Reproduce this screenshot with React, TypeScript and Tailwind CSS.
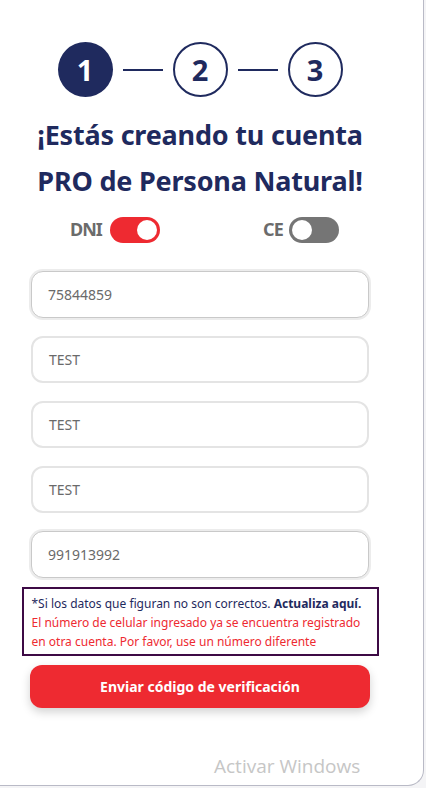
const NAVY = "text-[#1f2a5e]";

const FIELDS = [
  { value: "75844859", focused: true },
  { value: "TEST", focused: false },
  { value: "TEST", focused: false },
  { value: "TEST", focused: false },
  { value: "991913992", focused: true },
];

function Step({ n, active }: { n: number; active?: boolean }) {
  return (
    <div
      className={`w-[55px] h-[55px] rounded-full flex items-center justify-center text-[29px] font-bold leading-none ${
        active ? "bg-[#1f2a5e] text-white" : `border-2 border-[#1f2a5e] ${NAVY} bg-white`
      }`}
    >
      {n}
    </div>
  );
}

function Toggle({ on }: { on?: boolean }) {
  return (
    <div
      className={`w-[50px] h-[26px] rounded-full flex items-center px-[3px] ${
        on ? "bg-[#ee2a31] justify-end" : "bg-[#757575] justify-start"
      }`}
    >
      <div className="w-[20px] h-[20px] rounded-full bg-white" />
    </div>
  );
}

export default function App() {
  return (
    <div
      className="w-[426px] h-[788px] bg-[#f4f4f6] relative overflow-hidden"
      style={{ fontFamily: '"Noto Sans", "Open Sans", sans-serif' }}
    >
      <div className="w-[424px] h-[786px] bg-white rounded-br-[16px] border-r border-b border-[#b9bac6]">
        <div className="w-[400px] flex flex-col items-center pt-[42px]">
          <div className="flex items-center gap-[10px]">
            <Step n={1} active />
            <div className="w-[40px] h-[2px] bg-[#1f2a5e]" />
            <Step n={2} />
            <div className="w-[40px] h-[2px] bg-[#1f2a5e]" />
            <Step n={3} />
          </div>

          <h1 className={`mt-[15px] text-center text-[27px] leading-[46px] font-bold tracking-[-0.2px] ${NAVY}`}>
            ¡Estás creando tu cuenta
            <br />
            PRO de Persona Natural!
          </h1>

          <div className="mt-[12px] w-[269px] ml-[9px] flex items-center justify-between">
            <div className="flex items-center gap-[8px]">
              <span className="text-[18px] font-bold text-[#6b6b6b] tracking-[-1px]">DNI</span>
              <Toggle on />
            </div>
            <div className="flex items-center gap-[6px]">
              <span className="text-[18px] font-bold text-[#6b6b6b] tracking-[-0.8px]">CE</span>
              <Toggle />
            </div>
          </div>

          <div className="mt-[28px] flex flex-col gap-[18px]">
            {FIELDS.map((f, i) => (
              <div
                key={i}
                className={`w-[338px] h-[47px] rounded-[12px] bg-white flex items-center px-[16px] text-[14px] text-[#6a6a6a] ${
                  f.focused
                    ? "border border-[#c9c9c9] shadow-[0_0_0_2px_#ececec]"
                    : "border-2 border-[#e4e4e4]"
                }`}
              >
                {f.value}
              </div>
            ))}
          </div>

          <div className="mt-[9px] w-[357px] border-2 border-[#3d0a45] px-[8px] pt-[5px] pb-[3px] text-[12px] leading-[19px]">
            <p className="text-[#1f2a5e]">
              *Si los datos que figuran no son correctos. <span className="font-bold">Actualiza aquí.</span>
            </p>
            <p className="text-[#ee2a31]">
              El número de celular ingresado ya se encuentra registrado en otra cuenta. Por favor, use un número
              diferente
            </p>
          </div>

          <button
            type="button"
            className="mt-[9px] w-[340px] h-[43px] rounded-[12px] bg-[#ee2a31] text-white text-[14px] font-bold shadow-[0_4px_10px_rgba(0,0,0,0.18)]"
          >
            Enviar código de verificación
          </button>
        </div>
      </div>

      <div
        className="absolute left-[214px] top-[757px] text-[19px] text-[#c6c6c6] leading-none"
        style={{ fontFamily: '"Open Sans", sans-serif' }}
      >
        Activar Windows
      </div>
    </div>
  );
}
